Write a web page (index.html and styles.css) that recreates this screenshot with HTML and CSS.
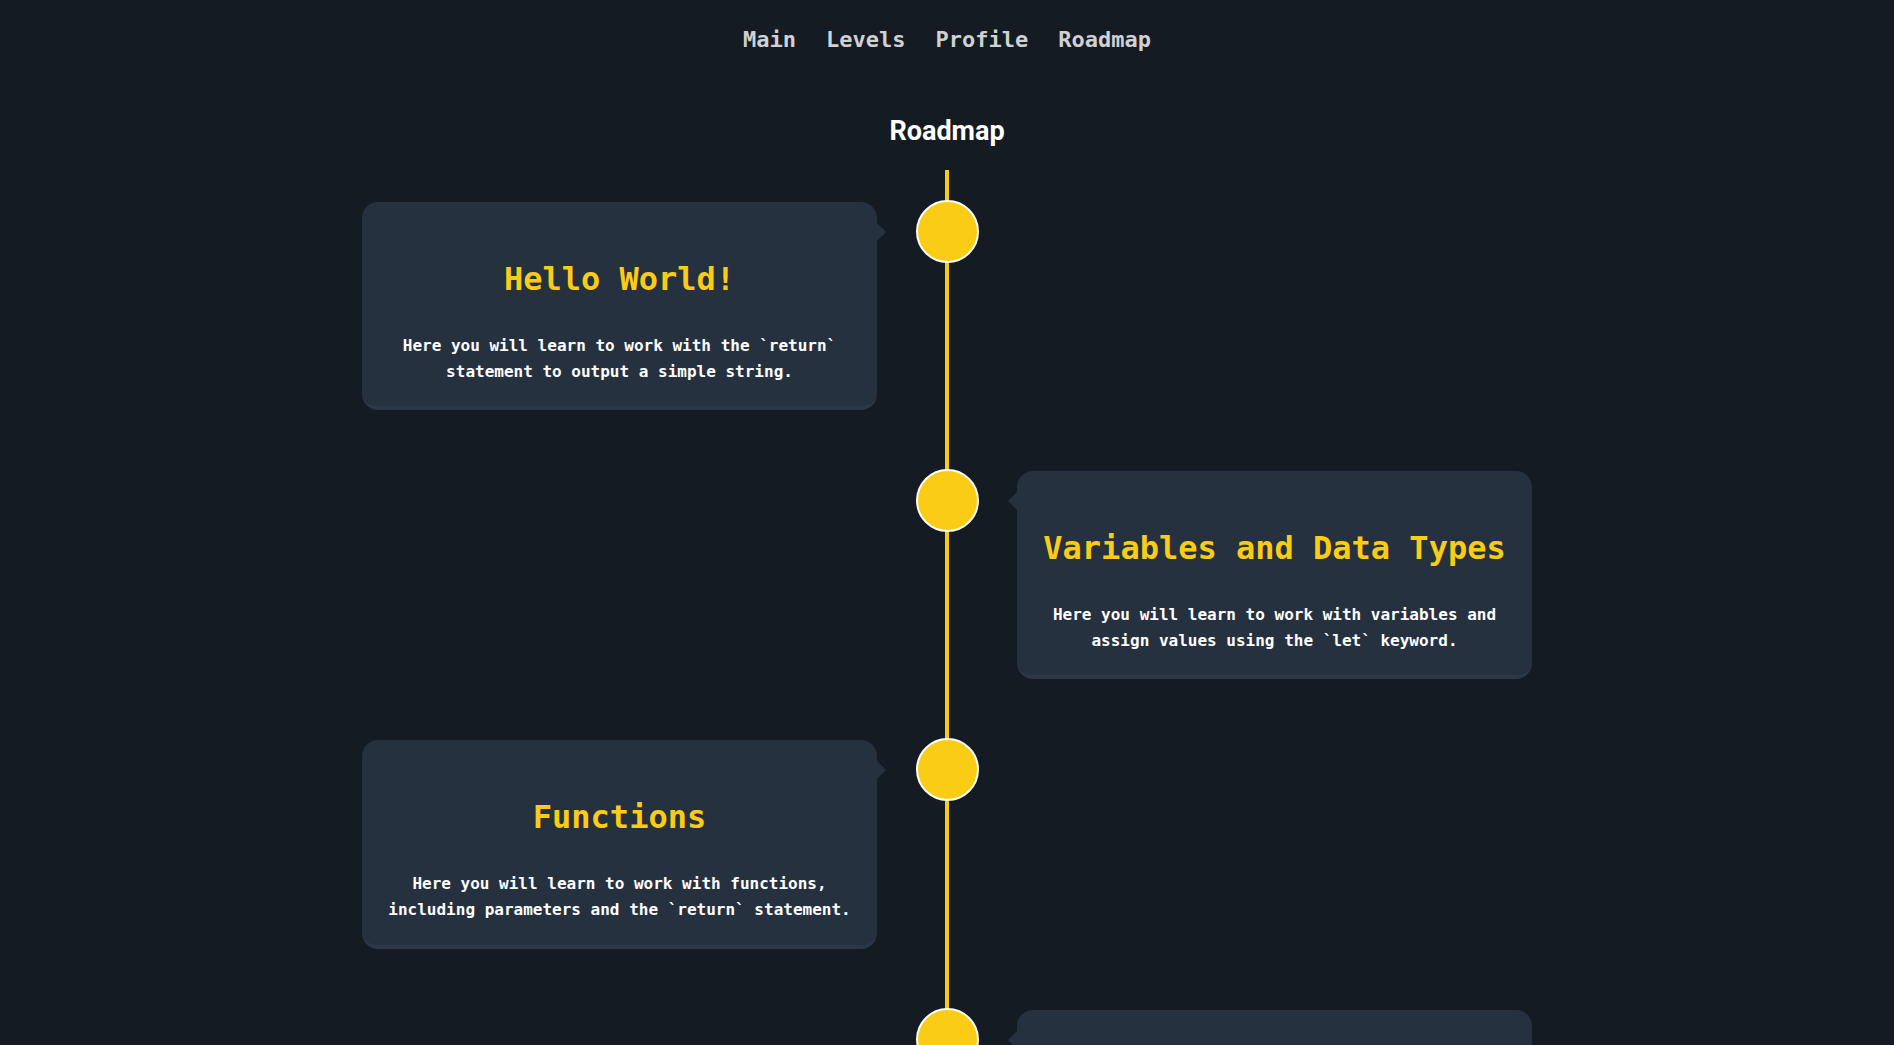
FILE: index.html
```html
<!DOCTYPE html>
<html lang="en">
<head>
<meta charset="utf-8">
<title>Roadmap</title>
<link rel="stylesheet" href="styles.css">
</head>
<body>
<nav class="nav">
  <a class="nav-link" href="#">Main</a>
  <a class="nav-link" href="#">Levels</a>
  <a class="nav-link" href="#">Profile</a>
  <a class="nav-link" href="#">Roadmap</a>
</nav>
<main>
  <h1 class="page-title">Roadmap</h1>
  <section class="timeline">
    <div class="row">
      <div class="card card-left">
        <h3 class="card-title">Hello World!</h3>
        <p class="card-text">Here you will learn to work with the `return` statement to output a simple string.</p>
      </div>
      <div class="node"><span class="dot"></span></div>
      <div class="empty"></div>
    </div>
    <div class="row">
      <div class="empty"></div>
      <div class="node"><span class="dot"></span></div>
      <div class="card card-right">
        <h3 class="card-title">Variables and Data Types</h3>
        <p class="card-text">Here you will learn to work with variables and assign values using the `let` keyword.</p>
      </div>
    </div>
    <div class="row">
      <div class="card card-left">
        <h3 class="card-title">Functions</h3>
        <p class="card-text">Here you will learn to work with functions, including parameters and the `return` statement.</p>
      </div>
      <div class="node"><span class="dot"></span></div>
      <div class="empty"></div>
    </div>
    <div class="row">
      <div class="empty"></div>
      <div class="node"><span class="dot"></span></div>
      <div class="card card-right">
        <h3 class="card-title">Conditionals</h3>
        <p class="card-text">Here you will learn to make decisions in your code using `if` and `else` statements.</p>
      </div>
    </div>
  </section>
</main>
</body>
</html>
```

FILE: styles.css
```css
html, body {
  margin: 0;
  padding: 0;
  background: #151b23;
}

body {
  font-family: "DejaVu Sans Mono", "Liberation Mono", monospace;
  color: #ffffff;
}

.nav {
  display: flex;
  justify-content: center;
  gap: 30px;
  padding-top: 23px;
}

.nav-link {
  font-size: 22px;
  line-height: 33px;
  font-weight: bold;
  color: #d0d1d3;
  text-decoration: none;
}

.page-title {
  margin: 59px 0 0;
  font-family: Roboto, "Open Sans", sans-serif;
  font-size: 27px;
  line-height: 32px;
  font-weight: 700;
  text-align: center;
  color: #ffffff;
}

.timeline {
  position: relative;
  width: 1170px;
  margin: 23px auto 0;
  padding-top: 30px;
  display: flex;
  flex-direction: column;
  gap: 59px;
}

.timeline::before {
  content: "";
  position: absolute;
  top: 0;
  bottom: 0;
  left: 583px;
  width: 4px;
  background: #facc15;
}

.row {
  display: grid;
  grid-template-columns: 515px 140px 515px;
  align-items: start;
}

.node {
  display: flex;
  justify-content: center;
  position: relative;
  z-index: 1;
}

.dot {
  width: 63px;
  height: 63px;
  box-sizing: border-box;
  border-radius: 50%;
  background: #facc15;
  border: 2px solid #ffffff;
}

.card {
  position: relative;
  margin-top: 2px;
  background: #263140;
  border-radius: 16px;
  border-bottom: 4px solid #2c3748;
  padding: 58px 22px 22px;
  text-align: center;
}

.card::after {
  content: "";
  position: absolute;
  top: 21px;
  border-top: 9px solid transparent;
  border-bottom: 9px solid transparent;
}

.card-left::after {
  right: -9px;
  border-left: 9px solid #263140;
}

.card-right::after {
  left: -9px;
  border-right: 9px solid #263140;
}

.card-title {
  margin: 0 0 35px;
  font-size: 32px;
  line-height: 38px;
  font-weight: bold;
  color: #facc15;
}

.card-text {
  margin: 0;
  font-size: 16px;
  line-height: 25.6px;
  font-weight: 600;
  color: #ffffff;
}
```
